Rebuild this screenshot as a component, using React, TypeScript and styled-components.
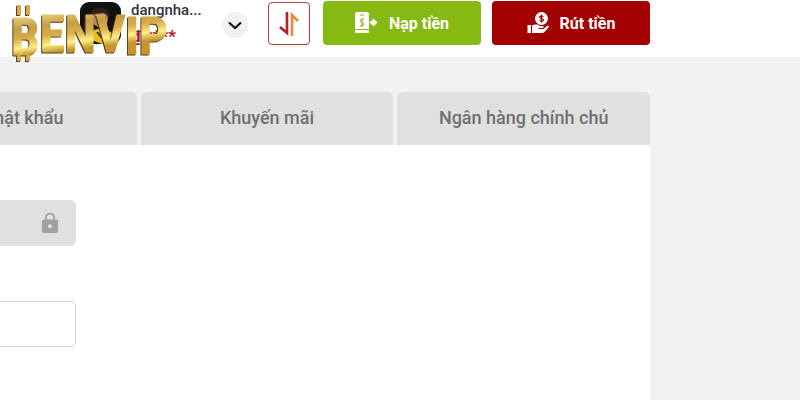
import React from "react";
import styled, { createGlobalStyle } from "styled-components";

const GlobalStyle = createGlobalStyle`
  * { box-sizing: border-box; }
  body { margin: 0; background: #f2f2f2; font-family: Roboto, "Noto Sans", sans-serif; }
  button, input { font: inherit; }
`;

const Page = styled.div`
  min-height: 100vh;
  display: flex;
  flex-direction: column;
  overflow: hidden;
`;

const Header = styled.header`
  position: relative;
  display: flex;
  align-items: flex-start;
  justify-content: flex-end;
  padding: 1px 150px 11px 0;
  background: #fff;
`;

const LogoLink = styled.a`
  position: absolute;
  left: 8px;
  top: 0;
  z-index: 1;
  svg {
    display: block;
    filter: drop-shadow(-1px 1px 0 #5a4218);
  }
`;

const Wordmark = styled.text`
  font-family: "Liberation Sans Narrow", "Roboto Condensed", Roboto, sans-serif;
  font-weight: 700;
  font-size: 51px;
`;

const Avatar = styled.svg`
  flex: none;
  margin-right: 10px;
`;

const User = styled.div`
  width: 91px;
  color: #31343c;
  font-size: 15px;
  font-weight: 500;
  line-height: 19px;
`;

const Balance = styled.div`
  margin-top: 6px;
  color: #b3151f;
  font-size: 17px;
  font-weight: 700;
  line-height: 20px;
`;

const Expand = styled.button`
  display: grid;
  place-items: center;
  width: 26px;
  height: 26px;
  margin: 11px 20px 0 0;
  padding: 0;
  border: 0;
  border-radius: 50%;
  background: #f1f1f1;
`;

const Transfer = styled.button`
  display: grid;
  place-items: center;
  width: 42px;
  height: 43px;
  margin: 1px 13px 0 0;
  padding: 0;
  border: 1px solid #bd3a3c;
  border-radius: 4px;
  background: #fff;
`;

const Action = styled.button<{ $color: string }>`
  display: flex;
  align-items: center;
  justify-content: center;
  gap: 11px;
  width: 158px;
  height: 44px;
  padding: 0;
  border: 0;
  border-radius: 4px;
  background: ${(p) => p.$color};
  color: #fff;
  font-size: 16px;
  font-weight: 700;
  & + & { margin-left: 11px; }
`;

const Main = styled.main`
  flex: 1;
  display: flex;
  flex-direction: column;
  margin: 35px 150px 0 -116px;
`;

const Tabs = styled.nav`
  display: grid;
  grid-template-columns: repeat(3, 1fr);
  gap: 4px;
`;

const Tab = styled.button`
  height: 53px;
  padding: 0 0 3px;
  border: 0;
  border-radius: 6px 6px 0 0;
  background: #e0e0e0;
  color: #707070;
  font-size: 18px;
  font-weight: 500;
`;

const Panel = styled.form`
  flex: 1;
  display: flex;
  flex-direction: column;
  gap: 55px;
  padding-top: 55px;
  background: #fff;
`;

const Field = styled.label<{ $locked?: boolean }>`
  display: flex;
  align-items: center;
  width: 192px;
  height: 46px;
  padding: 0 16px;
  border: 1px solid ${(p) => (p.$locked ? "#e0e0e0" : "#d4d4d4")};
  border-radius: 5px;
  background: ${(p) => (p.$locked ? "#e0e0e0" : "#fff")};
`;

const Input = styled.input`
  flex: 1;
  min-width: 0;
  border: 0;
  outline: 0;
  background: transparent;
`;

function Logo() {
  return (
    <svg width="168" height="66" viewBox="0 0 168 66" aria-label="BENVIP">
      <defs>
        <linearGradient id="gold" gradientUnits="userSpaceOnUse" x1="0" y1="8" x2="6" y2="57">
          <stop offset="0" stopColor="#bd8f36" />
          <stop offset="0.22" stopColor="#e8ca77" />
          <stop offset="0.45" stopColor="#c79d45" />
          <stop offset="0.65" stopColor="#d8ae4c" />
          <stop offset="0.84" stopColor="#fdf08a" />
          <stop offset="1" stopColor="#c59630" />
        </linearGradient>
      </defs>
      <g fill="url(#gold)" stroke="url(#gold)" strokeWidth="1" strokeLinejoin="round">
        <path d="M11 5v10M20 5v10M11 52v9M20 52v9" strokeWidth="4" stroke="#d4aa4c" />
        <Wordmark x="3" y="55">
          B<tspan dy="-3">ENV</tspan><tspan dy="2">IP</tspan>
        </Wordmark>
      </g>
    </svg>
  );
}

function DepositIcon() {
  return (
    <svg width="23" height="22" viewBox="0 0 23 22" aria-hidden="true">
      <path fill="#fff" d="M2 0h10a2 2 0 0 1 2 2v15H0V2a2 2 0 0 1 2-2zM0 18h14v2a1 1 0 0 1-1 1H1a1 1 0 0 1-1-1zM14.500 10.500L18.500 6.500l4 4-4 4z" />
      <path stroke="#86b911" strokeWidth="1" fill="none" d="M9 8C8 7 5 7 5 9s4 1 4 3-3 2-4 1M7 6v9M5 3h4" />
    </svg>
  );
}

function WithdrawIcon() {
  return (
    <svg width="22" height="22" viewBox="0 0 22 22" aria-hidden="true">
      <circle cx="14.500" cy="6.500" r="6.500" fill="#fff" />
      <path stroke="#a30000" strokeWidth="1.200" fill="none" d="M16.500 4.600c-1.500-1-3.800-.7-3.800.7 0 1.900 3.800.8 3.800 2.600 0 1.500-2.500 1.600-4 .6M14.500 2.500v8" />
      <path fill="#fff" d="M.5 13H4v8H.5zM5 13.500l2.500-1h3l2.500 1.500h2.500c1.500 0 1.500 2 0 2h-4v1h5l3.500-3c1.500-1 2.500.5 1.500 1.500L17 20.500 15.500 21H5z" />
    </svg>
  );
}

export default function App() {
  return (
    <Page>
      <GlobalStyle />
      <Header>
        <LogoLink href="#"><Logo /></LogoLink>
        <Avatar width="41" height="43" viewBox="0 0 41 43" aria-hidden="true">
          <rect y="1" width="41" height="42" rx="9" fill="#11110f" />
          <path d="M9 38c1-9 6-10 12-10s12 2 13 10l-12 5z" fill="#f0bc16" />
          <circle cx="20" cy="18" r="8" fill="#b98263" />
          <path d="M10 17c0-14 20-14 20 0l-6-5-9 1z" fill="#2e2119" />
          <path d="M17 31l4 5 4-5" fill="none" stroke="#392d12" strokeWidth="2" />
        </Avatar>
        <User>
          <div>dangnha...</div>
          <Balance>₫ ****</Balance>
        </User>
        <Expand type="button" aria-label="Mở menu">
          <svg width="14" height="9" viewBox="0 0 14 9" fill="none" stroke="#111" strokeWidth="2.200">
            <path d="M1 1.500l6 5.500 6-5.500" />
          </svg>
        </Expand>
        <Transfer type="button" aria-label="Chuyển quỹ">
          <svg width="22" height="24" viewBox="0 0 22 24" fill="none" strokeWidth="2.600">
            <path d="M9 0v21L2 15" stroke="#b51f29" />
            <path d="M14 24V3l6 6" stroke="#e88a36" />
          </svg>
        </Transfer>
        <Action type="button" $color="#86b911"><DepositIcon />Nạp tiền</Action>
        <Action type="button" $color="#a30000"><WithdrawIcon />Rút tiền</Action>
      </Header>
      <Main>
        <Tabs>
          <Tab type="button">Đổi mật khẩu</Tab>
          <Tab type="button">Khuyến mãi</Tab>
          <Tab type="button">Ngân hàng chính chủ</Tab>
        </Tabs>
        <Panel>
          <Field $locked>
            <Input type="text" disabled aria-label="Tên đăng nhập" />
            <svg width="18" height="24" viewBox="0 0 20 24" aria-hidden="true">
              <path d="M5.500 10V6a4.500 4.500 0 0 1 9 0v4" fill="none" stroke="#a0a0a0" strokeWidth="2" />
              <path fill="#a0a0a0" fillRule="evenodd" d="M3 8h14a2 2 0 0 1 2 2v11a2 2 0 0 1-2 2H3a2 2 0 0 1-2-2V10a2 2 0 0 1 2-2zM10 13.500a2.200 2.200 0 1 0 0 4.400 2.200 2.200 0 0 0 0-4.400z" />
            </svg>
          </Field>
          <Field>
            <Input type="text" aria-label="Thông tin" />
          </Field>
        </Panel>
      </Main>
    </Page>
  );
}
